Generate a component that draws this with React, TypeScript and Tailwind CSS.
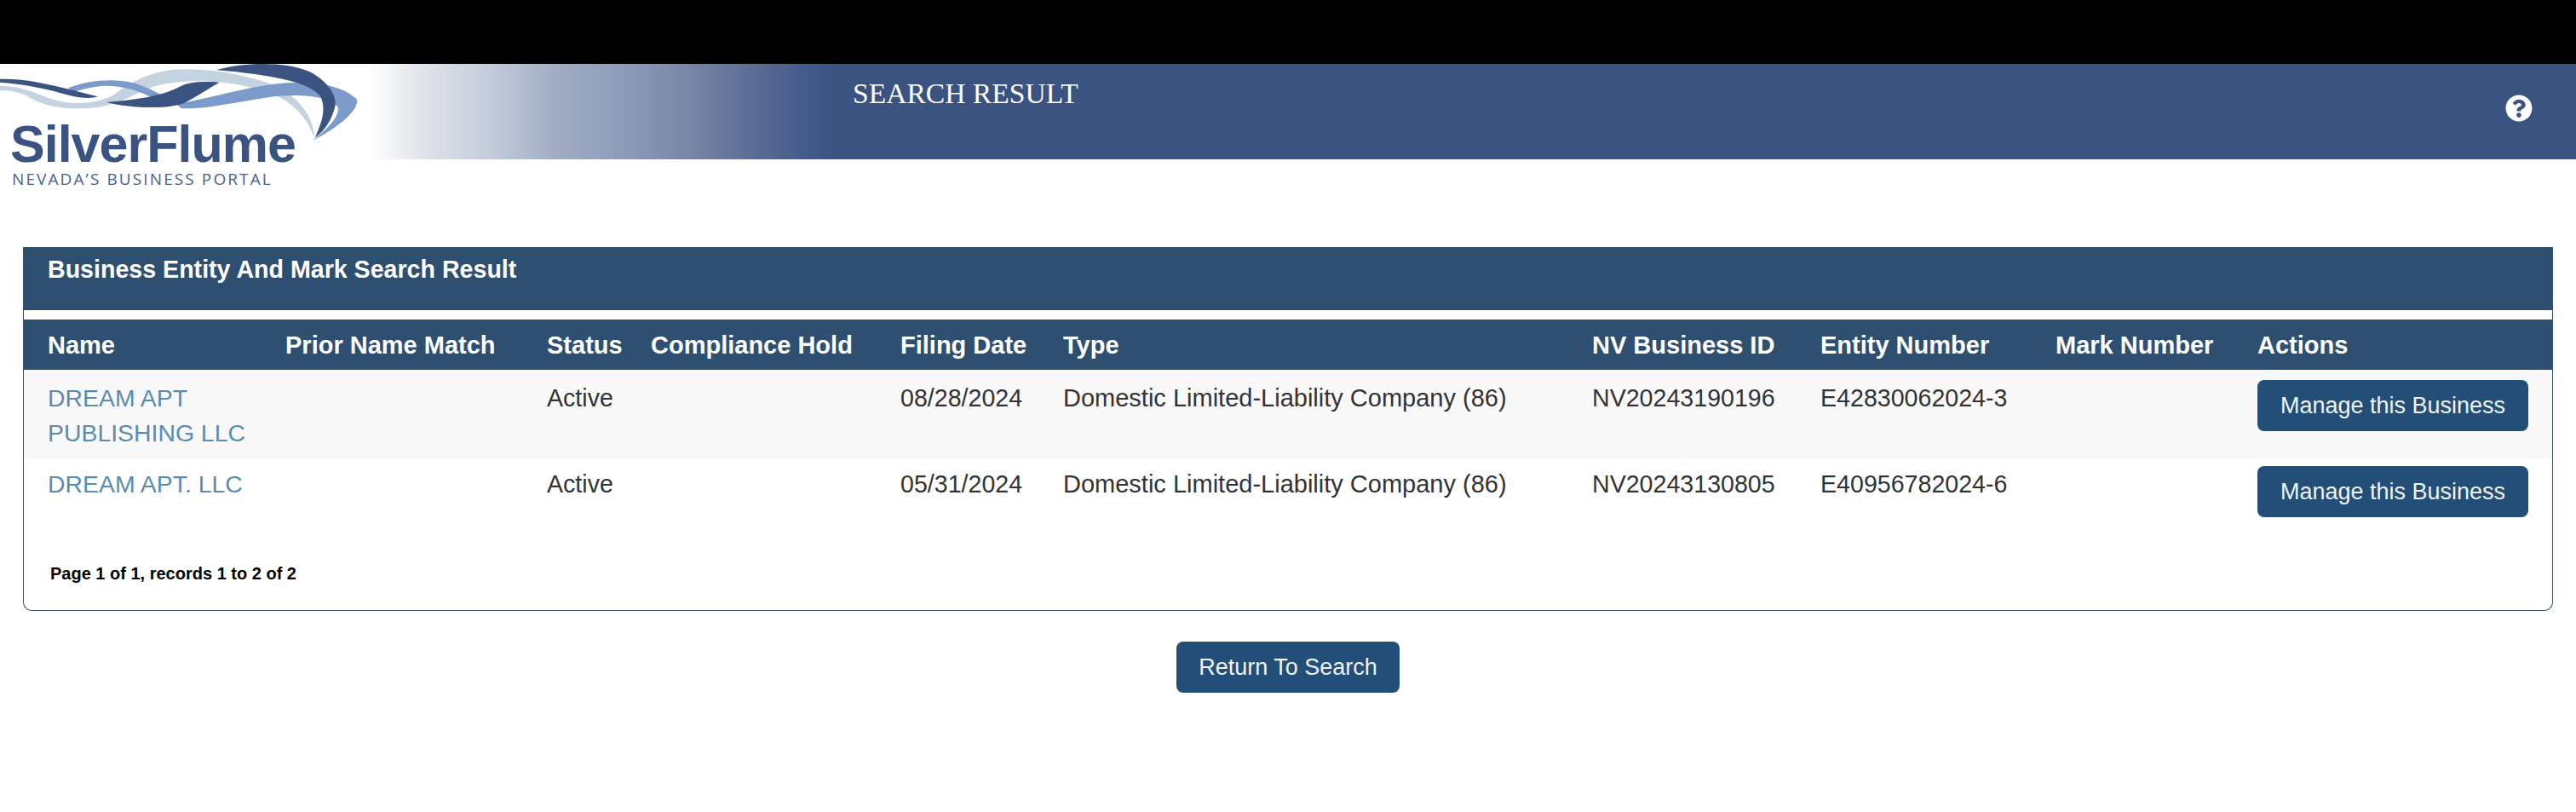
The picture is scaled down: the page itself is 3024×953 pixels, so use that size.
import { FaQuestionCircle } from 'react-icons/fa';

const columns = [
  'Name',
  'Prior Name Match',
  'Status',
  'Compliance Hold',
  'Filing Date',
  'Type',
  'NV Business ID',
  'Entity Number',
  'Mark Number',
  'Actions',
];

const rows = [
  {
    name: ['DREAM APT', 'PUBLISHING LLC'],
    status: 'Active',
    filingDate: '08/28/2024',
    type: 'Domestic Limited-Liability Company (86)',
    businessId: 'NV20243190196',
    entityNumber: 'E42830062024-3',
  },
  {
    name: ['DREAM APT. LLC'],
    status: 'Active',
    filingDate: '05/31/2024',
    type: 'Domestic Limited-Liability Company (86)',
    businessId: 'NV20243130805',
    entityNumber: 'E40956782024-6',
  },
];

const gridCols = 'grid grid-cols-[279px_307px_122px_293px_191px_621px_268px_276px_237px_1fr]';

function Logo() {
  return (
    <div className="absolute left-0 top-0 w-[433px] h-[150px] pl-[12px] pt-[62px] text-[#3b5380]">
      <svg viewBox="0 45 1300 300" className="absolute left-0 top-0 w-[433px] h-[100px]">
        <path
          fill="#c5d3e0"
          d="M0 122C70 122 120 145 170 165C240 190 320 190 390 160C440 130 480 88 600 66C720 55 860 80 960 118C1050 160 1105 225 1108 305C1085 240 1040 190 980 160C860 105 680 90 550 122C470 150 420 192 320 200C230 207 150 195 90 155C60 142 30 138 0 138Z"
        />
        <path
          fill="#7c9aca"
          d="M240 130C310 102 400 95 470 112C515 125 545 142 580 160L550 172C500 142 440 122 370 122C330 124 290 134 260 144ZM620 186C760 162 880 122 1010 112C1110 104 1210 122 1258 170C1265 210 1190 270 1100 316C1160 270 1200 225 1190 195C1150 155 1050 150 950 162C840 178 740 203 640 202Z"
        />
        <path
          fill="#3b5380"
          d="M762 66C860 40 1000 34 1090 72C1150 102 1185 150 1182 190C1172 240 1145 280 1110 305C1135 250 1150 205 1130 160C1090 108 960 84 762 66ZM375 180C480 170 570 160 640 122C670 108 720 106 775 110C735 130 700 158 650 182C600 204 470 204 375 180ZM0 98C90 96 170 116 250 136C285 146 315 153 345 160C320 168 285 166 245 156C170 134 90 116 0 110Z"
        />
      </svg>
      <div className="relative font-['Liberation_Sans',sans-serif] font-bold text-[61px] leading-[64px] tracking-[-1px]">SilverFlume</div>
      <div className="relative pl-[2px] font-['Open_Sans',sans-serif] text-[19px] leading-[18px] tracking-[2.1px] text-[#4a6090]">NEVADA&rsquo;S BUSINESS PORTAL</div>
    </div>
  );
}

export default function App() {
  return (
    <div className="min-h-[953px] bg-white font-['Liberation_Sans',Arial,sans-serif] text-[28.6px] leading-[40px] text-[#333333]">
      <div className="h-[75px] bg-black" />

      <header className="relative h-[112px] bg-[linear-gradient(90deg,#ffffff_433px,#dfe2e9_497px,#c5cddb_573px,#a3aec5_650px,#8e9dba_726px,#7a88a8_803px,#5d6e96_880px,#42598a_950px,#3b5380_980px)]">
        <Logo />
        <div className="flex items-start justify-between pl-[1001px] pr-[51px]">
          <h1 className="pt-[15px] font-['Liberation_Serif',serif] text-[33.6px] leading-[40px] text-white">SEARCH RESULT</h1>
          <FaQuestionCircle className="mt-[36px] text-white" size={32} />
        </div>
      </header>

      <main className="pl-[27px] pr-[27px] pt-[103px]">
        <section className="h-[427px] rounded-[10px] rounded-t-none border border-t-0 border-[#34506f]">
          <div className="-mx-px h-[74px] bg-[#2f4f70] pl-[29px] pt-[6px] font-bold text-white">
            Business Entity And Mark Search Result
          </div>
          <div className={`${gridCols} mt-[11px] h-[59px] items-center bg-[#2f4f70] pl-[28px] text-[29px] font-bold text-white`}>
            {columns.map((col) => (
              <div key={col}>{col}</div>
            ))}
          </div>

          {rows.map((row, idx) => (
            <div key={row.businessId} className={`${gridCols} pl-[28px] ${idx === 0 ? 'h-[104px] bg-[#f9f9f9]' : 'h-[100px]'}`}>
              <div className={`${idx === 0 ? 'pt-[13px]' : 'pt-[10px]'} text-[28.4px] leading-[41px] text-[#5a8bb0]`}>
                {row.name.map((line) => (
                  <div key={line}>{line}</div>
                ))}
              </div>
              <div />
              <div className={idx === 0 ? 'pt-[13px]' : 'pt-[10px]'}>{row.status}</div>
              <div />
              <div className={idx === 0 ? 'pt-[13px]' : 'pt-[10px]'}>{row.filingDate}</div>
              <div className={`${idx === 0 ? 'pt-[13px]' : 'pt-[10px]'} text-[29px]`}>{row.type}</div>
              <div className={idx === 0 ? 'pt-[13px]' : 'pt-[10px]'}>{row.businessId}</div>
              <div className={idx === 0 ? 'pt-[13px]' : 'pt-[10px]'}>{row.entityNumber}</div>
              <div />
              <div className={idx === 0 ? 'pt-[12px]' : 'pt-[9px]'}>
                <button className="h-[60px] w-[318px] rounded-[8px] bg-[#234e78] text-center text-[27px] text-[#eef4fa]">Manage this Business</button>
              </div>
            </div>
          ))}

          <div className="pl-[31px] pt-[20px] text-[20px] font-bold leading-[30px] text-black">Page 1 of 1, records 1 to 2 of 2</div>
        </section>

        <div className="flex justify-center pt-[36px]">
          <button className="h-[60px] w-[262px] rounded-[8px] bg-[#234e78] text-[27px] text-[#eef4fa]">Return To Search</button>
        </div>
      </main>
    </div>
  );
}
